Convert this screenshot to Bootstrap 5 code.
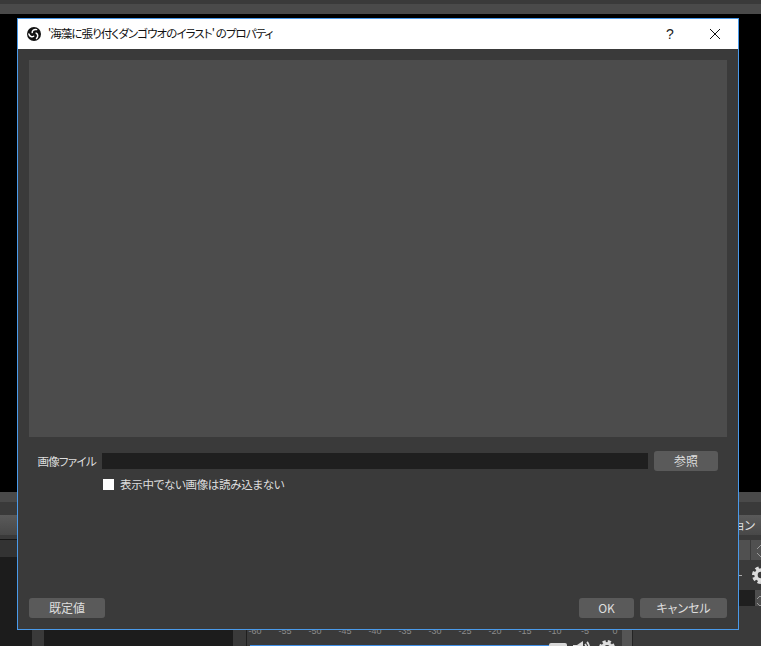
<!DOCTYPE html>
<html lang="ja">
  <head>
    <meta charset="UTF-8" />
    <meta name="viewport" content="width=device-width, initial-scale=1.0" />
    <title>プロパティ</title>
    <link href="https://cdn.jsdelivr.net/npm/bootstrap@5.3.0/dist/css/bootstrap.min.css" rel="stylesheet" />
    <style>
      html, body {
        height: 100%;
        overflow: hidden;
        background-color: #000;
      }
      body {
        font-family: "Noto Sans CJK JP", "Liberation Sans", sans-serif;
        font-size: 12px;
        font-feature-settings: "palt";
        color: #dedede;
      }
      /* main window behind the dialog */
      .desk {
        width: 761px;
        height: 646px;
      }
      .top-a { height: 4px; background-color: #3a3a3a; }
      .top-b { height: 10px; background-color: #4a4a4a; }
      .docks { height: 154px; background-color: #3a3a3a; }
      .dock-left { width: 233px; }
      .dock-mid { width: 386px; border-left: 1px solid #1f1f1f; margin-left: 13px; padding-top: 134px; }
      .dock-right { width: 129px; border-left: 1px solid #242424; }
      .scene-wrap { flex: 1 1 auto; }
      .strip-head { height: 10px; flex: none; background-color: #4a4a4a; }
      .strip-gap { height: 13px; flex: none; }
      .tab-face { height: 20px; flex: none; background: linear-gradient(#5a5a5a, #484848); }
      .tool-row { height: 18px; flex: none; background-color: #333; border-top: 1px solid #151515; margin-top: 4px; }
      .list-a { width: 32px; background-color: #1c1c1c; }
      .list-b { width: 12px; }
      .list-c { flex: 1 1 auto; background-color: #1c1c1c; }
      .dock-mid-inner { width: 375px; flex: none; padding-left: 3px; }
      .ticks { height: 10px; margin-left: -10px; font-size: 9px; line-height: 10px; color: #8c8c8c; font-family: "Liberation Sans", sans-serif; }
      .tick-cell { width: 30px; flex: none; text-align: center; }
      .fader { height: 10px; }
      .fader-track { width: 299px; height: 2px; margin-top: 9px; background-color: #3f8fe8; }
      .fader-knob { width: 18px; height: 8px; margin-top: 7px; background-color: #d8d8d8; border-radius: 2px 2px 0 0; }
      .ico-speaker { margin: 5px 0 0 6px; }
      .ico-gear { margin: 4px 0 0 9px; }
      .mid-scroll { width: 10px; flex: none; background-color: #555; }
      .right-tab { padding-right: 6px; height: 20px; flex: none; line-height: 20px; background: linear-gradient(#5a5a5a, #484848); color: #dedede; text-align: right; }
      .right-btns { height: 20px; margin-top: 5px; flex: none; }
      .right-btn-a { width: 40px; background-color: #505050; }
      .right-btn-b { width: 10px; margin-left: 1px; background-color: #505050; overflow: hidden; }
      .right-gear { height: 18px; margin-top: 6px; flex: none; }
      .right-dash { width: 4px; height: 1px; background-color: #aaa; margin-right: 10px; }
      .right-spin { height: 16px; margin-top: 6px; flex: none; }
      .right-field { width: 40px; background-color: #1f1f1f; }
      .right-arrows { width: 6px; background-color: #4e4e4e; overflow: hidden; }
      /* properties dialog */
      .prop-dialog {
        position: absolute;
        left: 17px;
        top: 18px;
        width: 722px;
        height: 612px;
        border: 1px solid #4a9aea;
        background-color: #3a3a3a;
      }
      .prop-title {
        height: 30px;
        flex: none;
        padding-left: 9px;
        background-color: #fff;
        color: #111;
      }
      .prop-title-text { margin: 0 0 2px 7px; line-height: 28px; font-size: 11.5px; letter-spacing: -0.92px; }
      .prop-help { width: 46px; padding-left: 2px; text-align: center; font-size: 14px; line-height: 30px; color: #222; font-family: "Liberation Sans", sans-serif; }
      .prop-close { width: 46px; }
      .prop-body { padding: 11px; }
      .prop-preview { background-color: #4c4c4c; }
      .file-row { height: 20px; margin-top: 14px; padding-right: 9px; gap: 6px; }
      .file-label { width: 67px; text-align: right; line-height: 20px; font-size: 11.5px; letter-spacing: -0.7px; }
      .file-input.form-control {
        height: 16px;
        min-height: 0;
        padding: 0;
        border: 0;
        border-radius: 0;
        background-color: #1f1f1f;
      }
      .dlg-btn.btn {
        height: 20px;
        padding: 0;
        border: 0;
        border-radius: 3px;
        background-color: #5a5a5a;
        color: #dedede;
        font-size: 12px;
        font-feature-settings: "palt";
        line-height: 20px;
      }
      .btn-browse.btn { width: 64px; flex: none; }
      .btn-default.btn { width: 76px; }
      .btn-ok.btn { width: 55px; }
      .btn-cancel.btn { width: 87px; }
      .skip-row { margin: 3px 0 1px 74px; height: 20px; line-height: 20px; gap: 6px; font-size: 11.5px; letter-spacing: -0.3px; }
      .skip-check.form-check-input {
        width: 11px;
        height: 11px;
        margin: 1px 0 0;
        border: 0;
        border-radius: 0;
        background-color: #fff;
        flex: none;
      }
      .foot-row { margin-top: 103px; gap: 6px; }
    </style>
  </head>
  <body>
    <div class="desk d-flex flex-column">
      <div class="top-a"></div>
      <div class="top-b"></div>
      <div class="flex-grow-1"></div>
      <div class="docks d-flex">
        <div class="dock-left d-flex flex-column flex-shrink-0">
          <div class="strip-head"></div>
          <div class="strip-gap"></div>
          <div class="tab-face"></div>
          <div class="tool-row"></div>
          <div class="scene-wrap d-flex">
            <div class="list-a"></div>
            <div class="list-b"></div>
            <div class="list-c"></div>
          </div>
        </div>
        <div class="dock-mid d-flex flex-shrink-0">
          <div class="dock-mid-inner">
            <div class="ticks d-flex">
              <span class="tick-cell">-60</span><span class="tick-cell">-55</span><span class="tick-cell">-50</span><span class="tick-cell">-45</span><span class="tick-cell">-40</span><span class="tick-cell">-35</span><span class="tick-cell">-30</span><span class="tick-cell">-25</span><span class="tick-cell">-20</span><span class="tick-cell">-15</span><span class="tick-cell">-10</span><span class="tick-cell">-5</span><span class="tick-cell">0</span>
            </div>
            <div class="fader d-flex align-items-start">
              <div class="fader-track"></div>
              <div class="fader-knob"></div>
              <svg class="ico-speaker flex-shrink-0" width="17" height="14" viewBox="0 0 17 14">
                <path d="M0 4h4l6-4v14l-6-4H0z" fill="#ddd" />
                <path d="M12 3c1.8 2 1.8 6 0 8M14 1c3 3 3 9 0 12" fill="none" stroke="#ddd" stroke-width="1.8" />
              </svg>
              <svg class="ico-gear flex-shrink-0" width="16" height="16" viewBox="0 0 16 16">
                <circle cx="8" cy="8" r="4.5" fill="none" stroke="#ddd" stroke-width="3" />
                <circle cx="8" cy="8" r="6.5" fill="none" stroke="#ddd" stroke-width="3" stroke-dasharray="3.1 2" />
              </svg>
            </div>
          </div>
          <div class="mid-scroll"></div>
        </div>
        <div class="dock-right d-flex flex-column flex-shrink-0">
          <div class="strip-head"></div>
          <div class="strip-gap"></div>
          <div class="right-tab text-nowrap">トランジション</div>
          <div class="right-btns d-flex justify-content-end">
            <div class="right-btn-a"></div>
            <div class="right-btn-b">
              <svg width="14" height="20" viewBox="0 0 14 20">
                <path d="M6 8l4-4 4 4M6 12l4 4 4-4" fill="none" stroke="#999" />
              </svg>
            </div>
          </div>
          <div class="right-gear d-flex justify-content-end align-items-center overflow-hidden">
            <div class="right-dash"></div>
            <svg class="flex-shrink-0" width="9" height="18" viewBox="0 0 9 18">
              <circle cx="9" cy="9" r="5" fill="none" stroke="#ddd" stroke-width="3.4" />
              <circle cx="9" cy="9" r="7.4" fill="none" stroke="#ddd" stroke-width="3.2" stroke-dasharray="3.4 2.4" />
            </svg>
          </div>
          <div class="right-spin d-flex justify-content-end">
            <div class="right-field"></div>
            <div class="right-arrows">
              <svg width="10" height="16" viewBox="0 0 10 16">
                <path d="M2 6l3-3 3 3M2 10l3 3 3-3" fill="none" stroke="#999" />
              </svg>
            </div>
          </div>
        </div>
      </div>
    </div>

    <div class="prop-dialog d-flex flex-column">
      <div class="prop-title d-flex align-items-center">
        <svg width="14" height="14" viewBox="0 0 14 14" class="flex-shrink-0">
          <circle cx="7" cy="7" r="7" fill="#111" />
          <g fill="none" stroke="#fff" stroke-width="1.5" stroke-linecap="round">
            <path d="M5.2 5.6C5 3.6 7 1.9 9.6 2.6" />
            <path d="M5.2 5.6C5 3.6 7 1.9 9.6 2.6" transform="rotate(120 7 7)" />
            <path d="M5.2 5.6C5 3.6 7 1.9 9.6 2.6" transform="rotate(240 7 7)" />
          </g>
        </svg>
        <span class="prop-title-text flex-grow-1 text-nowrap">'海藻に張り付くダンゴウオのイラスト' のプロパティ</span>
        <span class="prop-help">?</span>
        <span class="prop-close d-flex justify-content-center">
          <svg width="12" height="12" viewBox="0 0 12 12">
            <path d="M1 1l10 10M11 1L1 11" stroke="#111" stroke-width="1" fill="none" />
          </svg>
        </span>
      </div>
      <div class="prop-body d-flex flex-column flex-grow-1">
        <div class="prop-preview flex-grow-1"></div>
        <div class="file-row d-flex align-items-center">
          <label class="file-label flex-shrink-0" for="imgFile">画像ファイル</label>
          <input id="imgFile" type="text" class="file-input form-control flex-grow-1" />
          <button type="button" class="dlg-btn btn-browse btn">参照</button>
        </div>
        <div class="skip-row d-flex align-items-center">
          <input id="skipHidden" type="checkbox" class="skip-check form-check-input" />
          <label for="skipHidden">表示中でない画像は読み込まない</label>
        </div>
        <div class="foot-row d-flex">
          <button type="button" class="dlg-btn btn-default btn me-auto">既定値</button>
          <button type="button" class="dlg-btn btn-ok btn">OK</button>
          <button type="button" class="dlg-btn btn-cancel btn">キャンセル</button>
        </div>
      </div>
    </div>

    <script src="https://cdn.jsdelivr.net/npm/bootstrap@5.3.0/dist/js/bootstrap.bundle.min.js"></script>
  </body>
</html>
